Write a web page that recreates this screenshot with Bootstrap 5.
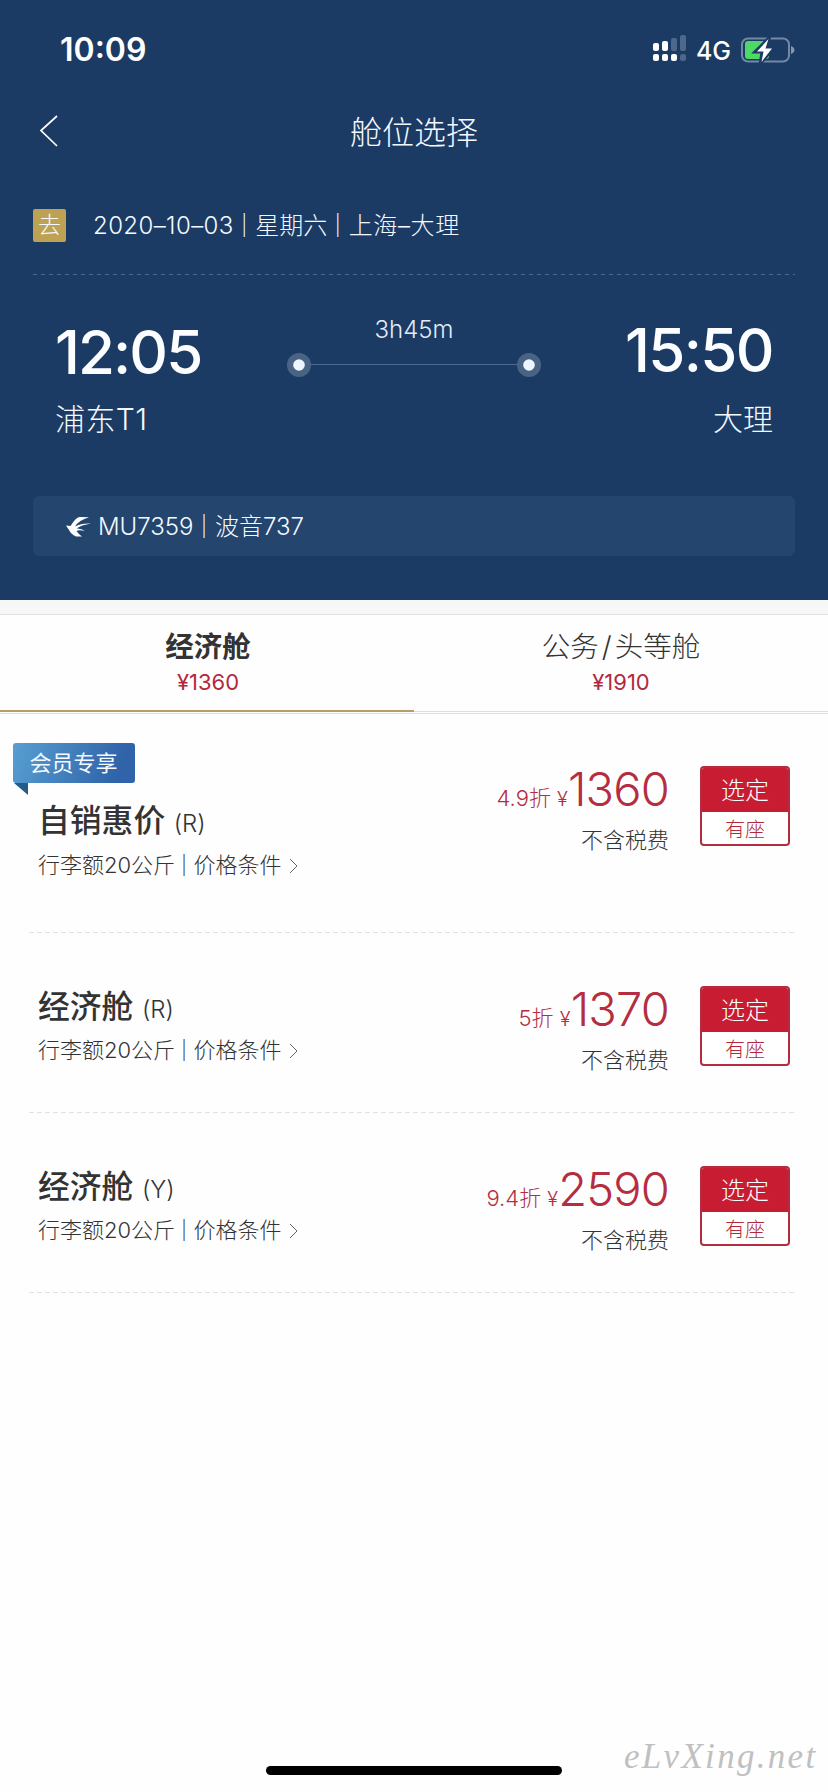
<!DOCTYPE html>
<html lang="zh-CN">
<head>
<meta charset="utf-8">
<meta name="viewport" content="width=device-width, initial-scale=1">
<title>舱位选择</title>
<link href="https://cdn.jsdelivr.net/npm/bootstrap@5.3.0/dist/css/bootstrap.min.css" rel="stylesheet">
<style>
  body { font-family: Inter, "Noto Sans CJK SC", sans-serif; font-weight: 300; color: #333; background: #fefefe; }
  .screen { width: 828px; height: 1792px; overflow: hidden; }
  .hero { height: 600px; background: #1b3b64; color: #f4f9ff; padding: 0 33px; }
  .statusbar { height: 100px; padding: 0 0 0 27px; }
  .clock { font-size: 32px; font-weight: 600; line-height: 100px; letter-spacing: 0; color: #fff; }
  .net { font-size: 25px; font-weight: 500; line-height: 28px; padding-top: 2px; color: #fff; }
  .titlebar { height: 64px; padding-left: 7px; }
  .titlebar h1 { font-size: 32px; font-weight: 300; line-height: 66px; padding-top: 1px; }
  .trip { height: 110px; padding-top: 45px; }
  .go-tag { width: 33px; height: 33px; line-height: 32px; background: #bea253; border-radius: 2px; font-size: 23px; margin-right: 27px; text-align: center; }
  .trip-text { font-size: 24px; line-height: 33px; white-space: nowrap; }
  .trip-date { letter-spacing: .4px; }
  .sep { font-weight: 400; margin: 0 -1px 0 -1.5px; }
  .trip-to { letter-spacing: .6px; }
  .dash { height: 1px; background: repeating-linear-gradient(90deg, var(--dash) 0 4px, transparent 4px 8px); }
  .hero .dash { --dash: #4b6a91; }
  .route { height: 221px; padding: 0 22px 0 23px; }
  .big-time { font-size: 60px; font-weight: 500; line-height: 60px; letter-spacing: -1.900px; color: #fbfdff; }
  .arr .big-time { letter-spacing: -1.600px; }
  .city { font-size: 30px; line-height: 40px; }
  .dep { width: 160px; padding-top: 47px; margin-left: -1px; }
  .arr { width: 160px; padding-top: 45px; text-align: right; }
  .arr .city { margin-top: 19px; }
  .dep .city { margin-top: 17px; letter-spacing: .4px; }
  .leg { width: 254px; padding-top: 40px; text-align: center; }
  .leg-time { font-size: 24px; line-height: 30px; color: #e3ecf8; margin-bottom: 7px; }
  .flight { height: 60px; border-radius: 6px; background: #23456e; padding: 2px 0 0 33px; font-size: 24px; }
  .strip { height: 15px; background: #f6f7f7; border-bottom: 1px solid #e2e2e2; }
  .cabin-tabs { height: 99px; border-bottom: 1px solid #dedede; }
  .cabin-tab { width: 50%; border-bottom: 1px solid #dedede; margin-bottom: 1px; padding-top: 13px; text-align: center; }
  .cabin-tab.active { border-bottom: 2px solid #b79d68; padding-left: 2px; }
  .cabin-name { font-size: 28.500px; line-height: 38px; }
  .active .cabin-name { font-weight: 600; }
  .slash { margin: 0 3px; }
  .cabin-price { font-size: 22px; line-height: 32px; font-weight: 400; color: #b2293d; }
  .fare { height: 179px; }
  .fare-first { height: 218px; padding-top: 39px; }
  .fare-row { height: 179px; padding: 53px 38px 0 38px; }
  .fare-first .fare-row { padding-top: 13px; }
  .first-info { padding-top: 34px; }
  .fares .dash { --dash: #e2e2e2; margin: 0 33px 0 29px; background: repeating-linear-gradient(90deg, var(--dash) 0 5px, transparent 5px 8px); }
  .fare-name { font-size: 31.800px; font-weight: 500; line-height: 44px; margin-top: -1px; }
  .fare-code { font-size: 24px; font-weight: 300; }
  .fare-desc { font-size: 22px; line-height: 30px; margin-top: 3px; white-space: nowrap; }
  .fare-desc .sep { margin: 0 -1.5px 0 -2px; }
  .fare-desc svg { margin-left: 1px; margin-top: -2px; }
  .first-info .fare-desc { margin-top: 4px; }
  .price-line { color: #b52d40; line-height: 50px; white-space: nowrap; height: 50px; margin-top: -2px; }
  .discount { font-size: 22px; }
  .yen { font-size: 20px; }
  .amount { font-size: 47px; letter-spacing: -.8px; margin-right: -1px; }
  .tax { font-size: 22px; line-height: 30px; margin: 11px -1px 0 0; }
  .pick { width: 90px; height: 80px; border-radius: 4px; border: 2px solid #b52b40; overflow: hidden; margin-left: 32px; padding: 0; background: #fff; text-align: center; display: block; font-weight: 300; }
  .fares .fare-row .pick-top { height: 44px; line-height: 45px; background: #c81c33; color: #fff; font-size: 24px; }
  .pick-sub { color: #b2293d; font-size: 20px; line-height: 36px; }
  .ribbon { top: 29px; left: 13px; }
  .ribbon-label { width: 122px; height: 40px; border-radius: 3px; background: linear-gradient(110deg, #589fd2, #3063a9 85%); color: #f5faff; font-size: 22px; line-height: 40px; text-align: center; font-weight: 400; padding-right: 1px; }
  .home-bar { width: 296px; height: 9px; border-radius: 5px; background: #000; left: 266px; top: 1766px; }
  .wm { font-family: "Liberation Serif", serif; font-style: italic; font-weight: 400; font-size: 35px; line-height: 44px; color: #c0c0c0; left: 624px; top: 1735px; letter-spacing: 2.300px; }
</style>
</head>
<body>
<div class="screen position-relative">
  <header class="hero">
    <div class="statusbar d-flex justify-content-between">
      <span class="clock">10:09</span>
      <div class="d-flex align-items-center">
        <svg width="34" height="28" viewBox="0 0 34 28" fill="#fff" style="margin-right:10px;margin-bottom:5px">
          <rect x="1" y="9" width="6" height="8" rx="2"/><rect x="10" y="7" width="6" height="10" rx="2"/>
          <g fill="#4d6889"><rect x="19" y="4" width="6" height="13" rx="2"/><rect x="28" y="1" width="6" height="16" rx="2"/><rect x="28" y="20" width="6" height="7" rx="2.5"/></g>
          <rect x="1" y="20" width="6" height="7" rx="2"/><rect x="10" y="20" width="6" height="7" rx="2"/><rect x="19" y="20" width="6" height="7" rx="2"/>
        </svg>
        <span class="net">4G</span>
        <svg width="54" height="26" viewBox="0 0 54 26" style="margin-left:10px">
          <rect x="1" y="1.5" width="47" height="23" rx="6" fill="none" stroke="#7388a5" stroke-width="2"/>
          <rect x="4" y="4" width="24" height="18" rx="3" fill="#4cd964"/>
          <path d="M50 9q3.500 1.500 3.500 4t-3.500 4z" fill="#8496af"/>
          <path d="M27.500 2L15 14.500h6.500L20 25l11.500-13.500h-6z" fill="#fff" stroke="#1b3b64" stroke-width="4"/>
          <path d="M27.500 2L16 14.500h6.500L20.500 25L31 11.500h-6.500z" fill="#fff"/>
        </svg>
      </div>
    </div>
    <nav class="titlebar d-flex align-items-center position-relative">
      <svg width="18" height="32" viewBox="0 0 18 32" fill="none" stroke="#fff" stroke-width="1.700" style="margin-top:-2px"><path d="M17 1L1 15.500L17 31"/></svg>
      <h1 class="m-0 position-absolute start-0 end-0 text-center">舱位选择</h1>
    </nav>
    <div class="trip d-flex">
      <span class="go-tag">去</span>
      <span class="trip-text"><span class="trip-date">2020–10–03</span><span class="sep">｜</span>星期六<span class="sep">｜</span><span class="trip-to">上海–大理</span></span>
    </div>
    <div class="dash"></div>
    <div class="route d-flex justify-content-between">
      <div class="dep"><div class="big-time">12:05</div><div class="city">浦东T1</div></div>
      <div class="leg">
        <div class="leg-time">3h45m</div>
        <svg class="d-block" width="254" height="26" viewBox="0 0 254 26">
          <path d="M24 12.500H230" stroke="#4d6b91"/>
          <circle cx="12" cy="13" r="12" fill="#496384"/><circle cx="12" cy="13" r="5.800" fill="#edf5ff"/>
          <circle cx="242" cy="13" r="12" fill="#496384"/><circle cx="242" cy="13" r="5.800" fill="#edf5ff"/>
        </svg>
      </div>
      <div class="arr"><div class="big-time">15:50</div><div class="city">大理</div></div>
    </div>
    <div class="flight d-flex align-items-center">
      <svg width="26" height="22" viewBox="0 0 26 22" fill="#fff" style="margin-right:6px">
        <path d="M0 9.500L4.500 10Q10 1 14 1L23 1.200Q13 4 9 10.500Q15 7 25 7.500Q15 9 10.500 12.500Q15 12 19 15Q13 13.500 10.500 15Q12 17.500 16 20.500L10 20.500Q5 18 3 14Z"/>
      </svg>
      <span>MU7359<span class="sep">｜</span>波音737</span>
    </div>
  </header>

  <div class="strip"></div>
  <div class="cabin-tabs d-flex">
    <div class="cabin-tab active"><div class="cabin-name">经济舱</div><div class="cabin-price">¥1360</div></div>
    <div class="cabin-tab"><div class="cabin-name">公务<span class="slash">/</span>头等舱</div><div class="cabin-price">¥1910</div></div>
  </div>

  <main class="fares">
    <section class="fare-first position-relative">
      <div class="ribbon position-absolute">
        <div class="ribbon-label">会员专享</div>
        <svg class="d-block" width="16" height="13" viewBox="0 0 16 13"><path d="M1 0H15V12Z" fill="#205d8b"/></svg>
      </div>
      <div class="fare-row d-flex">
        <div class="me-auto first-info"><div class="fare-name">自销惠价 <span class="fare-code">(R)</span></div>
          <div class="fare-desc">行李额20公斤<span class="sep">｜</span>价格条件 <svg width="9" height="16" viewBox="0 0 9 16" fill="none" stroke="#666"><path d="M1 1l7 7-7 7"/></svg></div></div>
        <div class="text-end"><div class="price-line"><span class="discount">4.9折 <span class="yen">¥</span></span><span class="amount">1360</span></div><div class="tax">不含税费</div></div>
        <button class="pick" type="button"><div class="pick-top">选定</div><div class="pick-sub">有座</div></button>
      </div>
    </section>
    <div class="dash"></div>
    <section class="fare">
      <div class="fare-row d-flex">
        <div class="me-auto"><div class="fare-name">经济舱 <span class="fare-code">(R)</span></div>
          <div class="fare-desc">行李额20公斤<span class="sep">｜</span>价格条件 <svg width="9" height="16" viewBox="0 0 9 16" fill="none" stroke="#666"><path d="M1 1l7 7-7 7"/></svg></div></div>
        <div class="text-end"><div class="price-line"><span class="discount">5折 <span class="yen">¥</span></span><span class="amount">1370</span></div><div class="tax">不含税费</div></div>
        <button class="pick" type="button"><div class="pick-top">选定</div><div class="pick-sub">有座</div></button>
      </div>
    </section>
    <div class="dash"></div>
    <section class="fare">
      <div class="fare-row d-flex">
        <div class="me-auto"><div class="fare-name">经济舱 <span class="fare-code">(Y)</span></div>
          <div class="fare-desc">行李额20公斤<span class="sep">｜</span>价格条件 <svg width="9" height="16" viewBox="0 0 9 16" fill="none" stroke="#666"><path d="M1 1l7 7-7 7"/></svg></div></div>
        <div class="text-end"><div class="price-line"><span class="discount">9.4折 <span class="yen">¥</span></span><span class="amount">2590</span></div><div class="tax">不含税费</div></div>
        <button class="pick" type="button"><div class="pick-top">选定</div><div class="pick-sub">有座</div></button>
      </div>
    </section>
    <div class="dash"></div>
  </main>
  <div class="home-bar position-absolute"></div>
  <div class="wm position-absolute">eLvXing.net</div>
</div>
<script src="https://cdn.jsdelivr.net/npm/bootstrap@5.3.0/dist/js/bootstrap.bundle.min.js"></script>
</body>
</html>
